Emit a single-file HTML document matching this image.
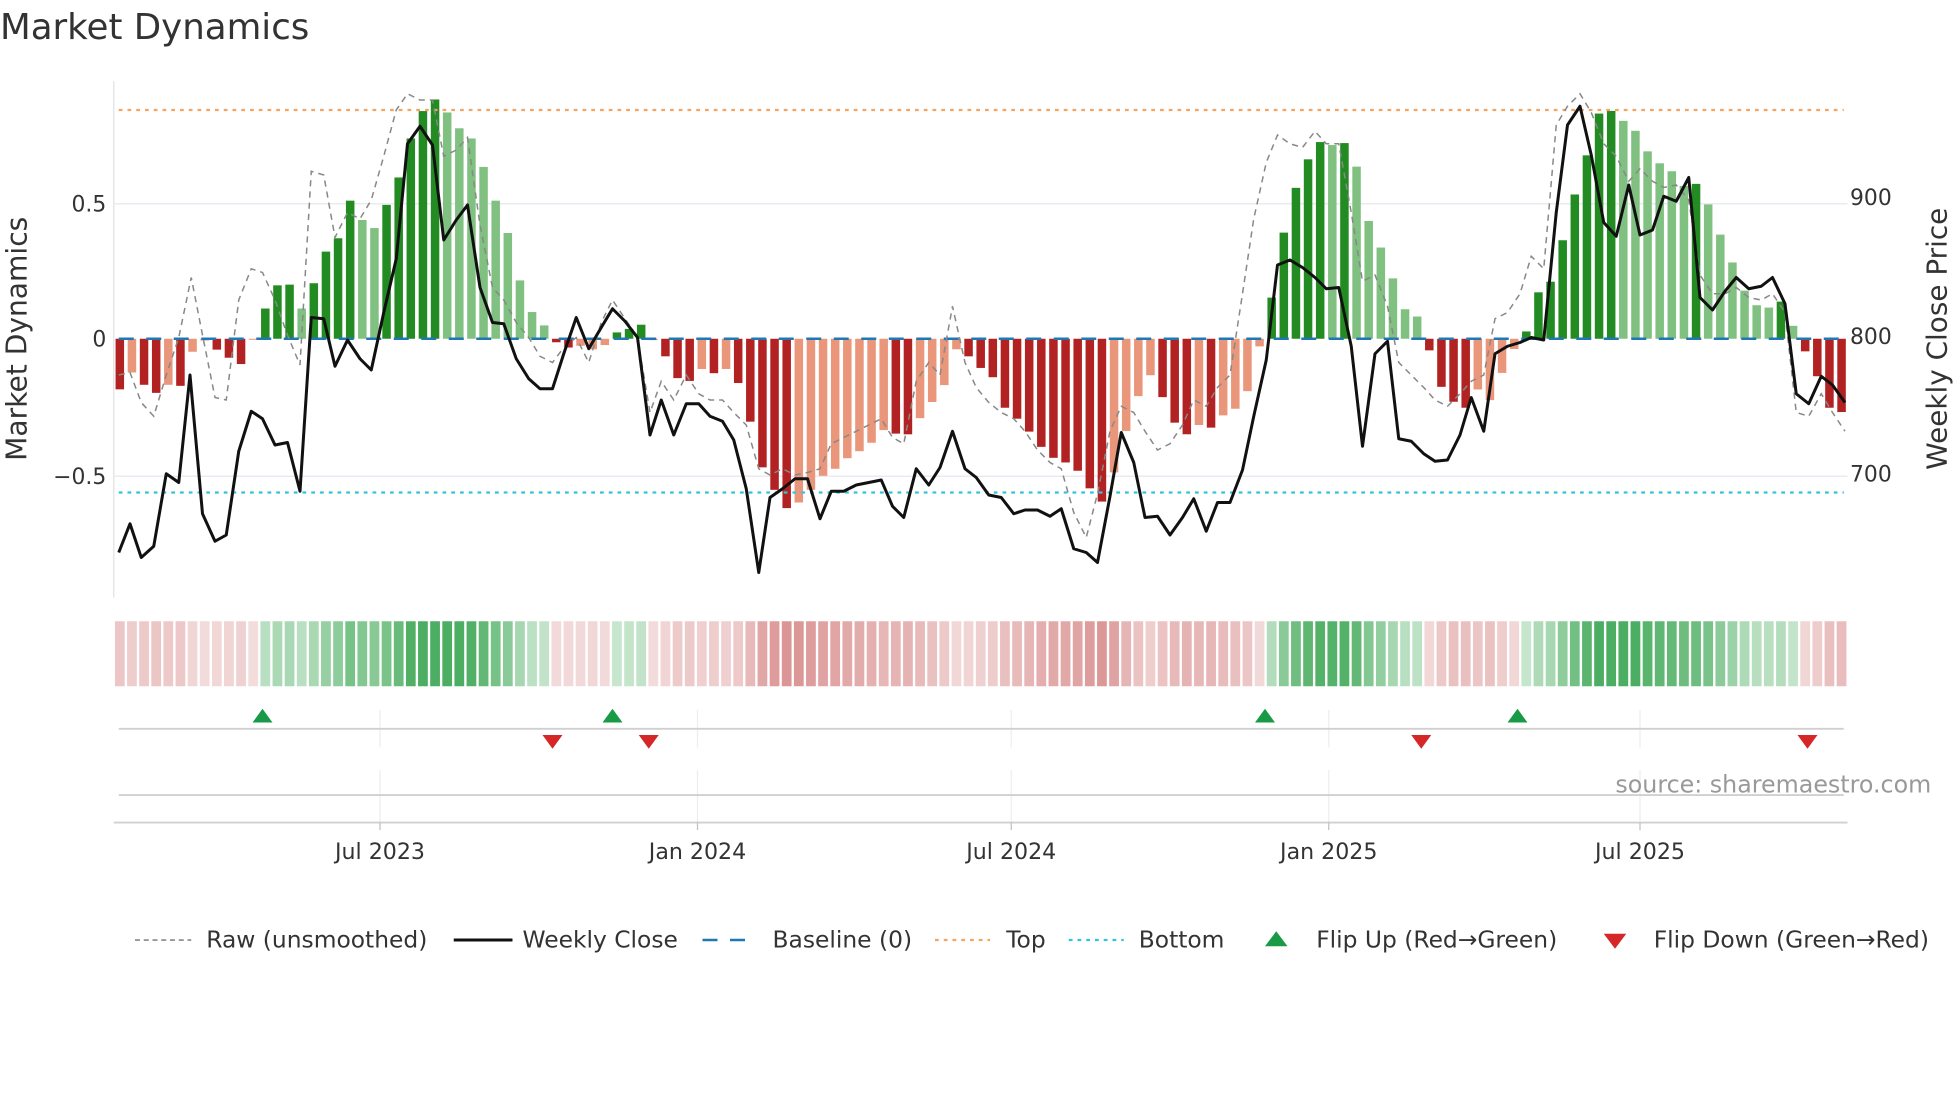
<!DOCTYPE html>
<html><head><meta charset="utf-8"><style>
html,body{margin:0;padding:0;background:#fff;}
svg{display:block;font-family:"DejaVu Sans","Liberation Sans",sans-serif;}
</style></head><body>
<svg id="s" width="1960" height="1102" viewBox="0 0 1568 881.6" xmlns="http://www.w3.org/2000/svg">
<text x="0" y="31" font-size="28.5" fill="#333">Market Dynamics</text>
<line x1="91" y1="65" x2="91" y2="478" stroke="#e3e3e3" stroke-width="1"/>
<line x1="91" y1="163" x2="1478" y2="163" stroke="#e8ebf1" stroke-width="1.2"/>
<line x1="91" y1="381" x2="1478" y2="381" stroke="#e8ebf1" stroke-width="1.2"/>
<g id="bars"></g>
<line x1="95" y1="271" x2="1475" y2="271" stroke="#1f77b4" stroke-width="2" stroke-dasharray="12,10"/>
<line x1="95" y1="88" x2="1475" y2="88" stroke="#f4a460" stroke-width="1.8" stroke-dasharray="3,4"/>
<line x1="95" y1="394" x2="1475" y2="394" stroke="#30c5dc" stroke-width="1.8" stroke-dasharray="3,4"/>
<polyline id="raw" fill="none" stroke="#888" stroke-width="1.2" stroke-dasharray="5,4"/>
<polyline id="close" fill="none" stroke="#111" stroke-width="2.4" stroke-linejoin="round"/>
<g font-size="17.5" fill="#333">
<text x="85" y="169" text-anchor="end">0.5</text>
<text x="85" y="277" text-anchor="end">0</text>
<text x="85" y="387" text-anchor="end">−0.5</text>
<text x="1480" y="164">900</text>
<text x="1480" y="275">800</text>
<text x="1480" y="385">700</text>
</g>
<text transform="translate(21,271) rotate(-90)" text-anchor="middle" font-size="22.5" fill="#333">Market Dynamics</text>
<text transform="translate(1557,271) rotate(-90)" text-anchor="middle" font-size="22.3" fill="#333">Weekly Close Price</text>
<g id="strip"></g>
<g stroke="#eceef2" stroke-width="1">
<line x1="304" y1="568" x2="304" y2="598"/><line x1="558" y1="568" x2="558" y2="598"/><line x1="809" y1="568" x2="809" y2="598"/><line x1="1063" y1="568" x2="1063" y2="598"/><line x1="1312" y1="568" x2="1312" y2="598"/>
<line x1="304" y1="616" x2="304" y2="658"/><line x1="558" y1="616" x2="558" y2="658"/><line x1="809" y1="616" x2="809" y2="658"/><line x1="1063" y1="616" x2="1063" y2="658"/><line x1="1312" y1="616" x2="1312" y2="658"/>
</g>
<line x1="95" y1="583" x2="1475" y2="583" stroke="#d0d0d0" stroke-width="1.5"/>
<line x1="95" y1="636" x2="1475" y2="636" stroke="#d0d0d0" stroke-width="1.5"/>
<line x1="91" y1="658" x2="1478" y2="658" stroke="#d0d0d0" stroke-width="1.5"/>
<g stroke="#c0c0c0" stroke-width="1"><line x1="304" y1="658" x2="304" y2="664"/><line x1="558" y1="658" x2="558" y2="664"/><line x1="809" y1="658" x2="809" y2="664"/><line x1="1063" y1="658" x2="1063" y2="664"/><line x1="1312" y1="658" x2="1312" y2="664"/></g>
<g fill="#1a9a47"><path d="M202,578 L218,578 L210,567Z"/><path d="M482,578 L498,578 L490,567Z"/><path d="M1004,578 L1020,578 L1012,567Z"/><path d="M1206,578 L1222,578 L1214,567Z"/></g>
<g fill="#d62728"><path d="M434,588 L450,588 L442,599Z"/><path d="M511,588 L527,588 L519,599Z"/><path d="M1129,588 L1145,588 L1137,599Z"/><path d="M1438,588 L1454,588 L1446,599Z"/></g>
<text x="1545" y="634" text-anchor="end" font-size="19" fill="#999">source: sharemaestro.com</text>
<g font-size="17.7" fill="#333" text-anchor="middle">
<text x="304" y="687">Jul 2023</text><text x="558" y="687">Jan 2024</text><text x="809" y="687">Jul 2024</text><text x="1063" y="687">Jan 2025</text><text x="1312" y="687">Jul 2025</text>
</g>
<g font-size="18.7" fill="#333">
<line x1="108" y1="752" x2="153" y2="752" stroke="#888" stroke-width="1.3" stroke-dasharray="4,3"/>
<text x="165" y="758">Raw (unsmoothed)</text>
<line x1="363" y1="752" x2="410" y2="752" stroke="#111" stroke-width="2.4"/>
<text x="418" y="758">Weekly Close</text>
<line x1="562" y1="752" x2="606" y2="752" stroke="#1f77b4" stroke-width="2" stroke-dasharray="12,10"/>
<text x="618" y="758">Baseline (0)</text>
<line x1="748" y1="752" x2="792" y2="752" stroke="#f4a460" stroke-width="1.8" stroke-dasharray="3,4"/>
<text x="805" y="758">Top</text>
<line x1="855" y1="752" x2="899" y2="752" stroke="#30c5dc" stroke-width="1.8" stroke-dasharray="3,4"/>
<text x="911" y="758">Bottom</text>
<path d="M1012,757 L1030,757 L1021,745Z" fill="#1a9a47"/>
<text x="1053" y="758">Flip Up (Red→Green)</text>
<path d="M1283,747 L1301,747 L1292,759Z" fill="#d62728"/>
<text x="1323" y="758">Flip Down (Green→Red)</text>
</g>
</svg>
<script>
var A="-144d,-96l,-131d,-154d,-131l,-134d,-37l,-5l,-31d,-54d,-72d,-3l,86d,152d,154d,86l,158d,248d,286d,393d,338l,315l,381d,459d,570d,648d,681d,644l,599l,570l,489l,393l,301l,166l,76l,38l,-10d,-25d,-20l,-30l,-18l,18d,28d,40d,-4l,-50d,-112d,-120d,-86l,-98d,-86l,-126d,-236d,-366d,-430d,-482d,-466l,-430l,-390l,-370l,-340l,-320l,-296l,-260l,-270d,-272d,-226l,-180l,-132l,-30l".split(",");
var B="-53d,-88d,-116d,-208d,-241d,-280d,-326d,-359d,-373d,-398d,-451d,-491d,-403l,-278l,-173l,-110l,-176d,-253d,-288d,-260l,-268d,-231l,-211l,-158l,-23l,124d,320d,455d,541d,593d,584l,590d,519l,355l,275l,182l,89l,67l,-35d,-145d,-190d,-208d,-153l,-185l,-103l,-31l,22d,140d,172d,297d,435d,553d,679d,687d,657l,627l,565l,529l,505l,461l,467d,405l,314l,230l,145l,101l,94l,112d,39l,-38d,-113d,-208d,-221d".split(",");
var items=[];A.forEach(function(s){items.push([parseFloat(s)/3.5575,s.slice(-1)]);});B.forEach(function(s){items.push([parseFloat(s)/3.769,s.slice(-1)]);});
var ns="http://www.w3.org/2000/svg",bars=document.getElementById("bars"),strip=document.getElementById("strip");
var mx=0;items.forEach(function(it){mx=Math.max(mx,Math.abs(it[0]));});
items.forEach(function(it,i){
 var x=95.85+i*9.7,v=it[0],d=it[1]=="d";
 var r=document.createElementNS(ns,"rect");
 r.setAttribute("x",x-3.4);r.setAttribute("width",6.8);
 if(v>=0){r.setAttribute("y",271-v);r.setAttribute("height",v);r.setAttribute("fill",d?"#228b22":"#80c080");}
 else{r.setAttribute("y",271);r.setAttribute("height",-v);r.setAttribute("fill",d?"#b22222":"#e9967a");}
 bars.appendChild(r);
 var m=Math.min(1,Math.abs(v)/mx*1.15);
 var c=document.createElementNS(ns,"rect");
 c.setAttribute("x",x-3.9);c.setAttribute("width",7.8);c.setAttribute("y",497);c.setAttribute("height",52);
 c.setAttribute("fill",v>=0?"rgba(45,160,70,"+(0.25+0.6*m)+")":"rgba(190,60,60,"+(0.18+0.45*m)+")");
 strip.appendChild(c);
});
var C="95,442 104,419 113,446 123,437 133,379 143,386 152,300 162,411 172,433 181,428 191,361 201,329 210,335 220,356 230,354 240,393 249,254 259,255 268,293 278,272 288,287 297,296 307,250 317,207 326,115 336,101 346,116 355,192 365,176 374,164 384,230 394,258 403,259 413,287 423,303 432,311 442,311 451,283 461,254 471,279 481,262 490,247 500,257 510,270 520,348 529,320 539,348 549,323 559,323 568,333 578,337 587,352 597,391 607,458 616,398 626,391 636,383 646,383 656,415 665,393 675,393 685,388 695,386 705,384 714,405 723,414 733,375 743,388 752,374 762,345 772,375 781,382 791,396 801,398 811,411 820,408 830,408 840,413 849,407 859,439 869,442 878,450 888,397 897,346 907,370 916,414 926,413 936,428 946,414 955,399 965,425 974,402 984,402 994,376 1003,333 1013,288 1022,212 1032,208 1042,214 1052,222 1061,231 1071,230 1081,277 1090,357 1100,283 1110,273 1119,351 1129,353 1139,363 1148,369 1158,368 1168,348 1177,318 1187,345 1196,283 1206,277 1216,274 1225,270 1235,272 1245,170 1254,100 1264,85 1273,124 1283,178 1293,189 1303,148 1312,188 1322,184 1331,157 1341,161 1351,142 1360,238 1370,248 1380,233 1389,222 1399,231 1409,229 1418,222 1428,243 1437,315 1447,323 1457,301 1466,308 1476,322";
var R="95,300 104,298 113,322 123,333 133,300 143,270 153,222 162,268 172,318 181,320 191,240 201,215 210,218 220,240 230,268 240,292 249,137 259,140 268,190 278,170 288,175 297,160 307,125 317,88 326,75 336,80 346,80 355,125 365,120 374,110 384,180 394,230 403,240 413,258 423,270 432,285 442,290 451,278 461,270 471,290 481,258 490,240 500,255 510,270 520,330 529,305 539,320 549,300 559,315 568,320 578,320 587,330 597,340 607,375 616,380 626,375 636,380 646,378 656,375 665,355 675,350 685,345 695,340 705,335 714,350 723,355 733,305 743,290 752,300 762,245 772,290 781,310 791,322 801,330 811,335 820,345 830,360 840,370 849,375 859,410 869,430 878,395 888,345 897,325 907,330 916,345 926,360 936,355 946,340 955,320 965,325 974,310 984,300 994,235 1003,175 1013,130 1022,108 1032,115 1042,118 1052,105 1061,115 1071,115 1081,170 1090,225 1100,220 1110,245 1119,290 1129,300 1139,310 1148,320 1158,325 1168,315 1177,305 1187,300 1196,255 1206,250 1216,235 1225,205 1235,215 1245,100 1254,85 1264,75 1273,90 1283,115 1293,125 1303,145 1312,135 1322,145 1331,150 1341,148 1351,160 1360,220 1370,235 1380,235 1389,230 1399,238 1409,240 1418,235 1428,250 1437,330 1447,333 1457,315 1466,330 1476,345";
document.getElementById("close").setAttribute("points",C);
document.getElementById("raw").setAttribute("points",R);
</script>
</body></html>
